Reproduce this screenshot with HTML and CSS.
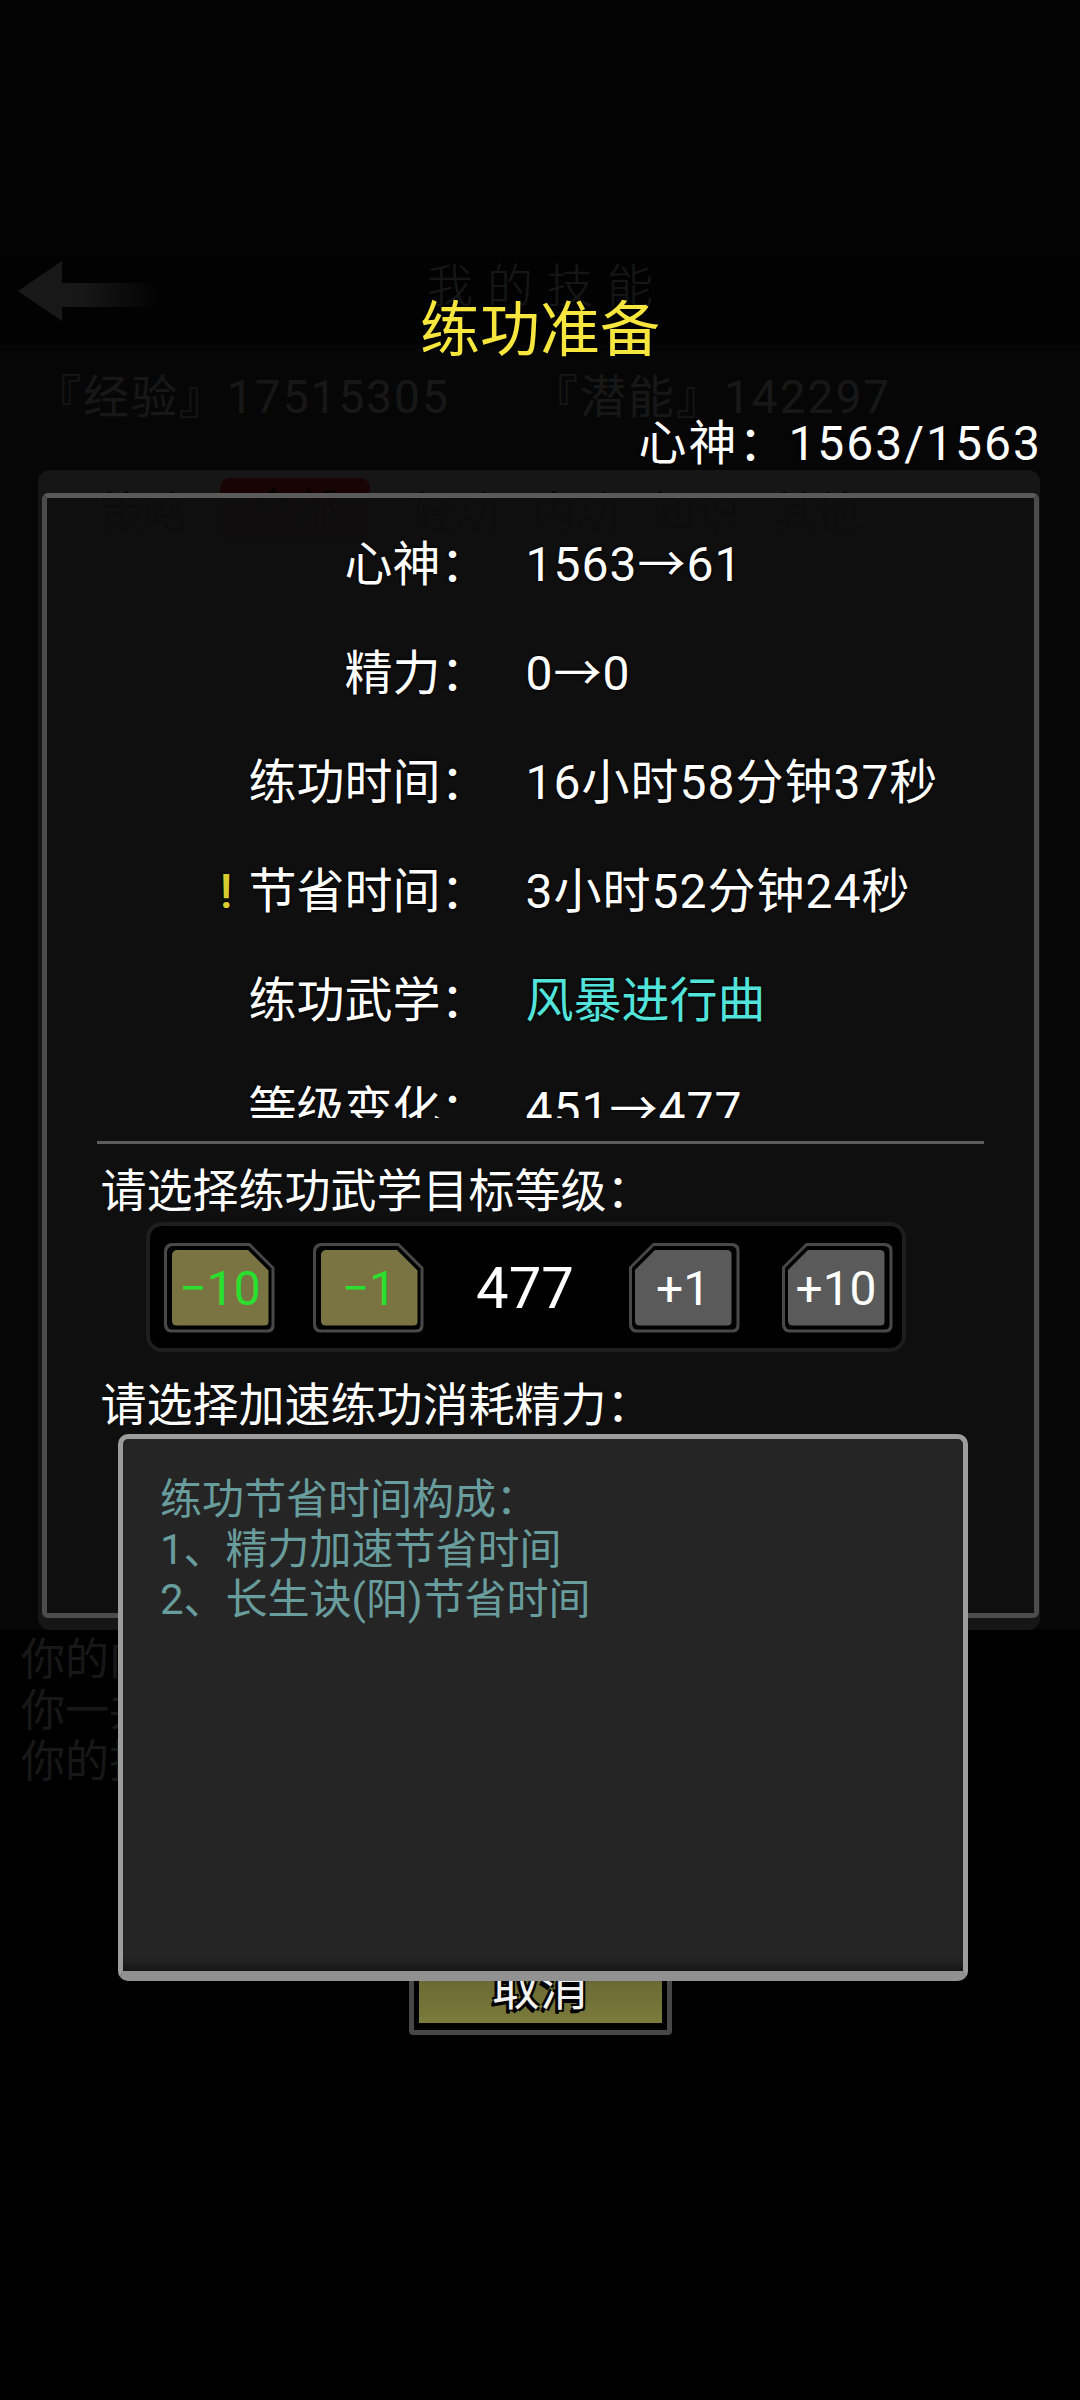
FILE: index.html
```html
<!DOCTYPE html>
<html lang="zh-CN">
<head>
<meta charset="utf-8">
<title>练功准备</title>
<link rel="stylesheet" href="styles.css">
</head>
<body>
<div class="screen">
  <div class="page">
    <header class="page-head">
      <svg class="back" viewBox="0 0 140 62" width="140" height="62" aria-hidden="true">
        <defs>
          <linearGradient id="fade" x1="0" y1="0" x2="1" y2="0">
            <stop offset="0" stop-color="#cfcfcf"/>
            <stop offset="0.45" stop-color="#bdbdbd"/>
            <stop offset="1" stop-color="#bdbdbd" stop-opacity="0"/>
          </linearGradient>
        </defs>
        <path d="M0 30 L44 0 L44 22 L140 22 L140 46 L44 46 L44 60 Z" fill="url(#fade)"/>
      </svg>
      <h1 class="page-title">我的技能</h1>
      <span></span>
    </header>
    <div class="page-main">
      <div class="stats">
        <span>『经验』17515305</span>
        <span>『潜能』142297</span>
      </div>
      <section class="skill-panel">
        <nav class="tabs">
          <span>策略</span>
          <span class="tab-on">全部</span>
          <span>轻功</span>
          <span>内功</span>
          <span>知识</span>
          <span>其他</span>
        </nav>
        <ul class="skill-list">
          <li><span>山河剑法</span><span>452级</span></li>
          <li><span>长生诀</span><span>388级</span></li>
          <li><span>风暴进行曲</span><span>451级</span></li>
        </ul>
      </section>
    </div>
    <div class="page-notes">
      <p>你的内功修为深厚</p>
      <p>你一共学会了十二门武学</p>
      <p>你的技能点尚有剩余</p>
    </div>
  </div>

  <div class="overlay">
    <div class="dialog">
      <h2 class="dlg-title">练功准备</h2>
      <div class="mind">心神：1563/1563</div>
      <div class="panel">
        <div class="info">
          <div class="info-grid">
            <div class="lbl">心神：</div><div class="val">1563→61</div>
            <div class="lbl">精力：</div><div class="val">0→0</div>
            <div class="lbl">练功时间：</div><div class="val">16小时58分钟37秒</div>
            <div class="lbl"><span class="warn">!</span>节省时间：</div><div class="val">3小时52分钟24秒</div>
            <div class="lbl">练功武学：</div><div class="val val-skill">风暴进行曲</div>
            <div class="lbl">等级变化：</div><div class="val">451→477</div>
          </div>
        </div>
        <div class="sep"></div>
        <p class="prompt">请选择练功武学目标等级：</p>
        <div class="stepper">
          <div class="btn btn-minus cut-right"><div class="btn-gap"><div class="btn-face">−10</div></div></div>
          <div class="btn btn-minus cut-right"><div class="btn-gap"><div class="btn-face">−1</div></div></div>
          <div class="step-val">477</div>
          <div class="btn btn-plus cut-left"><div class="btn-gap"><div class="btn-face">+1</div></div></div>
          <div class="btn btn-plus cut-left"><div class="btn-gap"><div class="btn-face">+10</div></div></div>
        </div>
        <p class="prompt prompt-2">请选择加速练功消耗精力：</p>
      </div>
      <button class="cancel" type="button"><span class="cancel-face">取消</span></button>
    </div>

    <div class="tip">
      <p>练功节省时间构成：</p>
      <p>1、精力加速节省时间</p>
      <p>2、长生诀(阳)节省时间</p>
    </div>
  </div>
</div>
</body>
</html>
```

FILE: styles.css
```css
* { box-sizing: border-box; }

html, body {
  margin: 0;
  padding: 0;
  background: #000;
}

body {
  width: 1080px;
  height: 2400px;
  overflow: hidden;
  font-family: Roboto, "Noto Sans CJK SC", sans-serif;
  color: #fff;
}

.screen {
  position: relative;
  width: 1080px;
  height: 2400px;
  overflow: hidden;
}

/* ---------- underlying page (dimmed) ---------- */
.page {
  width: 1080px;
  height: 2400px;
  background: #000;
  color: #bdbdbd;
}

.page-head {
  height: 345px;
  display: grid;
  grid-template-columns: 1fr auto 1fr;
  align-items: start;
  padding-top: 261px;
  background: #161616;
}

.back {
  display: block;
  margin-left: 18px;
}

.page-title {
  margin: 0;
  font-size: 46px;
  line-height: 50px;
  font-weight: 300;
  letter-spacing: 14px;
  padding-left: 14px;
  color: #b4b4b4;
}

.page-main {
  background: #363636;
  height: 1285px;
}

.stats {
  height: 125px;
  display: grid;
  grid-template-columns: 497px auto;
  padding: 22px 0 0 35px;
  font-size: 46px;
  line-height: 60px;
  letter-spacing: 2px;
  color: #bcbcbc;
}

.skill-panel {
  margin: 0 40px 0 38px;
  height: 1160px;
  background: #b4b4b4;
  border-radius: 12px;
}

.tabs {
  height: 80px;
  display: flex;
  align-items: center;
  padding-left: 62px;
  font-size: 44px;
  color: #2a2a2a;
  gap: 42px;
}

.tabs span {
  width: 78px;
  text-align: center;
  white-space: nowrap;
}

.tabs .tab-on {
  width: 150px;
  height: 64px;
  line-height: 64px;
  background: #c42424;
  border-radius: 10px;
  color: #4a1010;
}

.skill-list {
  list-style: none;
  margin: 40px 0 0;
  padding: 0 30px;
}

.skill-list li {
  display: flex;
  justify-content: space-between;
  height: 140px;
  align-items: center;
  font-size: 44px;
  color: #e0e0e0;
}

.page-notes {
  padding: 5px 0 0 21px;
  font-size: 44px;
  line-height: 51px;
  color: #bdbdbd;
}

.page-notes p { margin: 0; }

/* ---------- modal ---------- */
.overlay {
  position: absolute;
  inset: 0;
  background: rgba(0, 0, 0, 0.88);
}

.dialog {
  display: flex;
  flex-direction: column;
  align-items: center;
  padding-top: 296px;
}

.dlg-title {
  margin: 0;
  font-size: 60px;
  line-height: 70px;
  font-weight: 400;
  color: #f7e63d;
  text-shadow: 0 0 2px #000;
}

.mind {
  align-self: stretch;
  text-align: right;
  padding-right: 38px;
  margin-top: 48px;
  font-size: 48px;
  line-height: 60px;
  letter-spacing: 2px;
  text-shadow: 0 0 2px #000, 0 0 2px #000;
}

.panel {
  margin-top: 19px;
  width: 997px;
  height: 1125px;
  border: 5px solid #4c4c4c;
  border-top-color: #5a5a5a;
  border-radius: 6px;
  background: rgba(14, 14, 14, 0.9);
  overflow: hidden;
}

.info {
  margin-top: 12px;
  height: 608px;
  overflow: hidden;
}

.info-grid {
  display: grid;
  grid-template-columns: 442px 1fr;
  grid-auto-rows: 109px;
  column-gap: 37px;
  align-items: center;
  font-size: 48px;
  line-height: 60px;
  text-shadow: 0 0 2px #000, 0 0 3px #000;
}

.lbl {
  text-align: right;
  color: #fff;
  white-space: nowrap;
}

.warn {
  color: #d6ce2e;
  margin-right: 16px;
  font-weight: 500;
}

.val {
  color: #fff;
  white-space: nowrap;
  letter-spacing: 1px;
}

.val-skill { color: #52e4da; letter-spacing: 0; }

.sep {
  margin: 23px 50px 0;
  height: 3px;
  background: #5d5d5d;
}

.prompt {
  margin: 17px 0 0 54px;
  font-size: 46px;
  line-height: 60px;
  color: #fff;
  text-shadow: 0 0 2px #000;
}

.prompt-2 { margin-top: 23px; }

.stepper {
  margin: 1px 0 0 99px;
  width: 760px;
  height: 130px;
  border: 4px solid #1e1e1e;
  border-radius: 16px;
  background: #000;
  display: flex;
  align-items: center;
  padding: 1px 9px 0 14px;
}

.btn {
  width: 111px;
  height: 90px;
  background: #484848;
  padding: 3px;
  border-radius: 8px;
  flex: none;
}

.btn + .btn { margin-left: 38px; }
.btn-plus + .btn-plus { margin-left: 42px; }

.btn-gap {
  width: 100%;
  height: 100%;
  background: #000;
  border-radius: 6px;
  padding: 4px 3px 4px 5px;
}

.btn-plus .btn-gap { padding: 4px 5px 4px 3px; }

.btn-face {
  width: 100%;
  height: 100%;
  border-radius: 5px;
  display: flex;
  align-items: center;
  justify-content: center;
  font-size: 48px;
  line-height: 1;
  padding-top: 2px;
}

.cut-right { clip-path: polygon(0 0, calc(100% - 25px) 0, 100% 25px, 100% 100%, 0 100%); }
.cut-right .btn-gap { clip-path: polygon(0 0, calc(100% - 23px) 0, 100% 23px, 100% 100%, 0 100%); }
.cut-right .btn-face { clip-path: polygon(0 0, calc(100% - 21px) 0, 100% 21px, 100% 100%, 0 100%); }

.cut-left { clip-path: polygon(25px 0, 100% 0, 100% 100%, 0 100%, 0 25px); }
.cut-left .btn-gap { clip-path: polygon(23px 0, 100% 0, 100% 100%, 0 100%, 0 23px); }
.cut-left .btn-face { clip-path: polygon(21px 0, 100% 0, 100% 100%, 0 100%, 0 21px); }

.btn-minus .btn-face {
  background: #7a7443;
  color: #2ae02e;
}

.btn-plus .btn-face {
  background: #5a5a5a;
  color: #fff;
}

.step-val {
  flex: 1;
  text-align: center;
  font-size: 58px;
  line-height: 1;
  color: #fff;
  padding-right: 2px;
}

.cancel {
  margin-top: 312px;
  width: 263px;
  border: 5px solid #474747;
  border-radius: 4px;
  background: #000;
  padding: 5px 5px 7px;
  font: inherit;
  cursor: pointer;
}

.cancel-face {
  display: block;
  height: 83px;
  padding-top: 10px;
  line-height: 77px;
  font-size: 48px;
  color: #f2f2f2;
  background: linear-gradient(#4f4f2b, #6c6c35 55%, #7b7b3c);
  text-shadow: 2px 2px 0 #000, -2px -2px 0 #000, 2px -2px 0 #000, -2px 2px 0 #000, -3px 4px 0 #000;
}

/* tooltip */
.tip {
  position: absolute;
  left: 118px;
  top: 1434px;
  width: 850px;
  height: 547px;
  border: 5px solid #9d9d9d;
  border-bottom-width: 10px;
  border-bottom-color: #919191;
  border-radius: 10px;
  background: #252525;
  box-shadow: inset 0 -14px 10px -8px rgba(0, 0, 0, 0.45);
  padding: 36px 0 0 37px;
  font-size: 42px;
  line-height: 50px;
  color: #699d9d;
}

.tip p { margin: 0; }
```
